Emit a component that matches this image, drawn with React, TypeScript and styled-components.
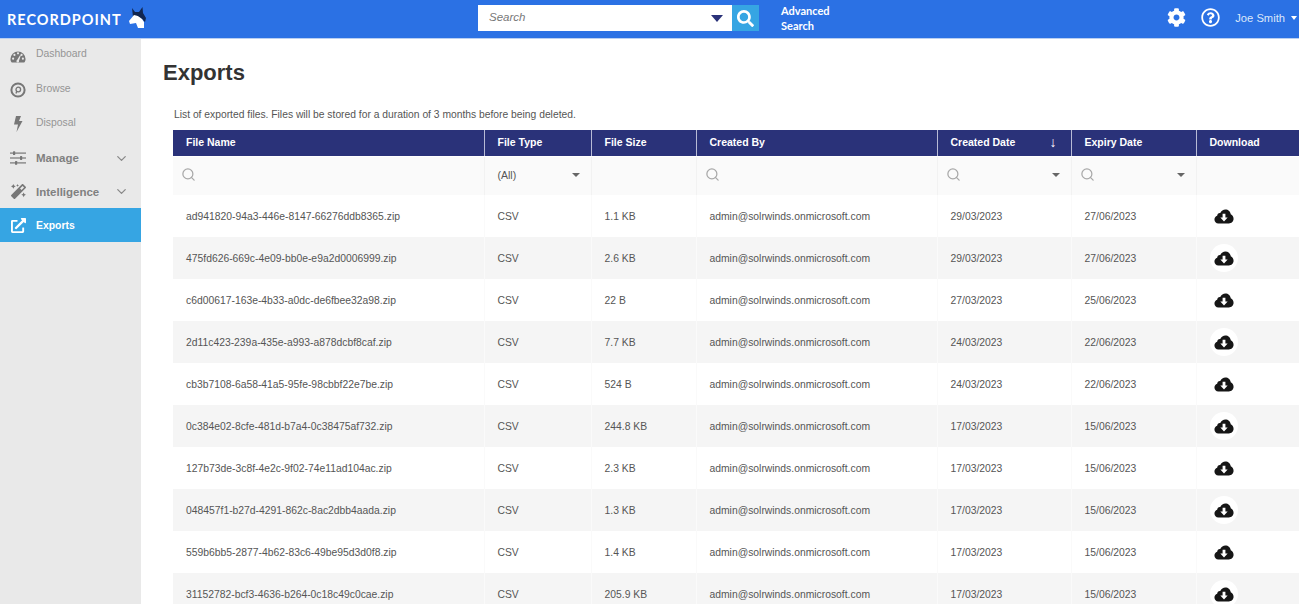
import React from "react";
import styled, { createGlobalStyle } from "styled-components";
import { FaCog, FaExternalLinkAlt, FaMagic, FaSearch, FaRegQuestionCircle } from "react-icons/fa";
import { FiChevronDown, FiSearch } from "react-icons/fi";

const GlobalStyle = createGlobalStyle`
  html, body {
    margin: 0;
    height: 100%;
    overflow: hidden;
    background: #fff;
    font-family: "Liberation Sans", Arial, sans-serif;
  }
`;

const Page = styled.div`
  width: 1299px;
  height: 604px;
  display: flex;
  flex-direction: column;
  overflow: hidden;
`;

const TopBar = styled.header`
  height: 36px;
  padding-bottom: 2px;
  flex: none;
  display: flex;
  align-items: center;
  background: #2b71e4;
  border-bottom: 1px solid #b9cff2;
  box-sizing: content-box;
  color: #fff;
`;

const Logo = styled.div`
  width: 478px;
  flex: none;
  display: flex;
  align-items: center;
  padding: 2px 0 0 7px;
  box-sizing: border-box;
  font-family: Lato, sans-serif;
  font-size: 14.5px;
  font-weight: 700;
  letter-spacing: 1px;
`;

const LogoMark = styled.svg`
  width: 18px;
  height: 22px;
  margin-left: 7px;
  margin-top: -4px;
`;

const SearchBox = styled.div`
  width: 254px;
  height: 26px;
  flex: none;
  display: flex;
  align-items: center;
  justify-content: space-between;
  padding: 0 9px 2px 11px;
  box-sizing: border-box;
  background: #fff;
  color: #777;
  font-size: 11.5px;
  font-style: italic;
`;

const SearchCaret = styled.span`
  width: 0;
  height: 0;
  margin-top: 2px;
  border-left: 6px solid transparent;
  border-right: 6px solid transparent;
  border-top: 7px solid #2a3279;
`;

const SearchButton = styled.button`
  width: 27px;
  height: 26px;
  flex: none;
  padding: 0;
  border: 0;
  display: flex;
  align-items: center;
  justify-content: center;
  background: #36a5e3;
  color: #fff;
  font-size: 17px;
`;

const AdvancedLink = styled.a`
  margin-left: 22px;
  width: 70px;
  font-family: Lato, sans-serif;
  font-size: 11px;
  font-weight: 700;
  line-height: 15px;
  color: #fff;
`;

const UserArea = styled.div`
  margin-left: auto;
  padding-right: 2px;
  display: flex;
  align-items: center;
  font-size: 11.2px;
  color: #dce7fa;
`;

const SettingsIcon = styled(FaCog)`
  font-size: 19px;
  color: #fff;
  margin: -1px 15px 0 0;
`;

const HelpIcon = styled(FaRegQuestionCircle)`
  font-size: 19px;
  color: #fff;
  margin: -1px 15px 0 0;
`;

const UserCaret = styled.span`
  width: 0;
  height: 0;
  margin: 0 0 0 6px;
  border-left: 3.5px solid transparent;
  border-right: 3.5px solid transparent;
  border-top: 4px solid #fff;
`;

const Body = styled.div`
  flex: 1;
  min-height: 0;
  display: flex;
`;

const Sidebar = styled.nav`
  width: 141px;
  flex: none;
  background: #e9e9e9;
`;

const NavItem = styled.a<{ $active?: boolean; $group?: boolean; $h: number }>`
  height: ${(p) => p.$h}px;
  display: flex;
  align-items: center;
  padding: 0 12px 0 10px;
  box-sizing: border-box;
  background: ${(p) => (p.$active ? "#36a5e3" : "transparent")};
  color: ${(p) => (p.$active ? "#fff" : p.$group ? "#808080" : "#959595")};
  font-size: ${(p) => (p.$group ? 11.5 : 10.4)}px;
  font-weight: ${(p) => (p.$group || p.$active ? 700 : 400)};
`;

const NavLabel = styled.span<{ $up?: number }>`
  position: relative;
  top: ${(p) => -(p.$up ?? 0)}px;
`;

const NavIcon = styled.span<{ $active?: boolean }>`
  width: 16px;
  height: 16px;
  margin-right: 10px;
  flex: none;
  display: flex;
  align-items: center;
  justify-content: center;
  font-size: 15px;
  color: ${(p) => (p.$active ? "#fff" : "#777")};
`;

const NavChevron = styled(FiChevronDown)`
  margin-left: auto;
  font-size: 15px;
  color: #888;
`;

const Main = styled.main`
  flex: 1;
  min-width: 0;
  padding: 21px 0 0 22px;
`;

const Title = styled.h1`
  margin: 0;
  font-size: 22px;
  line-height: 26px;
  font-weight: 700;
  color: #333;
`;

const Intro = styled.p`
  margin: 22px 0 0 11px;
  font-size: 10.3px;
  line-height: 14px;
  color: #555;
`;

const Table = styled.table`
  margin: 8px 0 0 10px;
  width: 1126px;
  border-collapse: collapse;
  table-layout: fixed;
  font-size: 10.35px;
  color: #555;
`;

const HeadCell = styled.th<{ $w: number }>`
  width: ${(p) => p.$w}px;
  height: 26px;
  padding: 0 0 2px 13px;
  box-sizing: border-box;
  background: #2a3279;
  border-left: 1px solid #b8bbd6;
  border-bottom: 1px solid #fff;
  color: #fff;
  font-size: 10.5px;
  font-weight: 700;
  text-align: left;
  &:first-child {
    border-left: 0;
  }
`;

const HeadInner = styled.span`
  display: flex;
  align-items: center;
  justify-content: space-between;
  padding-right: 14px;
`;

const SortArrow = styled.span`
  font-size: 14px;
  font-weight: 400;
  line-height: 14px;
`;

const FilterCell = styled.td`
  height: 39px;
  padding: 0 0 2px 8px;
  box-sizing: border-box;
  background: #fafafa;
  border-left: 1px solid #f2f2f2;
  &:first-child {
    border-left: 0;
  }
`;

const FilterInner = styled.div<{ $indent?: number }>`
  display: flex;
  align-items: center;
  justify-content: space-between;
  padding: 0 11px 0 ${(p) => p.$indent ?? 0}px;
  color: #555;
  font-size: 10.5px;
`;

const FilterSearch = styled(FiSearch)`
  font-size: 15px;
  color: #a8a8a8;
  display: block;
`;

const FilterCaret = styled.span`
  width: 0;
  height: 0;
  border-left: 4px solid transparent;
  border-right: 4px solid transparent;
  border-top: 4px solid #666;
`;

const Row = styled.tr`
  height: 42px;
  &:nth-child(even) td {
    background: #f5f5f5;
  }
`;

const Cell = styled.td<{ $pad?: number }>`
  padding: 0 0 0 ${(p) => p.$pad ?? 13}px;
  box-sizing: border-box;
  border-left: 1px solid #fafafa;
  background: #fff;
  &:first-child {
    border-left: 0;
  }
`;

const DownloadCircle = styled.span<{ $lit?: boolean }>`
  width: 28px;
  height: 28px;
  margin-left: 13px;
  border-radius: 50%;
  display: flex;
  align-items: center;
  justify-content: center;
  background: ${(p) => (p.$lit ? "#fff" : "transparent")};
`;

const CloudIcon = () => (
  <svg width="20" height="15" viewBox="0 0 21 16">
    <path
      d="M4.5 15.5C2 15.5 .3 13.6 .3 11.3c0-1.900 1.200-3.500 2.900-4C3.300 5.300 4.800 4 6.500 4.300 7.600 1.800 9.700.5 12 .5c3 0 5.400 2.200 5.700 5.200 1.800.8 3 2.700 3 4.800 0 2.800-2.200 5-5 5Z"
      fill="#161616"
    />
    <path d="M9 5h3v4h2.400l-3.900 4.200L6.600 9H9Z" fill="#fff" />
  </svg>
);

const GaugeIcon = () => (
  <svg width="18" height="16" viewBox="0 0 18 16">
    <path d="M.5 11.500a8.500 8.500 0 1 1 17 0c0 1.300-.3 2.300-.9 3.300a1 1 0 0 1-.8.400H2.200a1 1 0 0 1-.8-.4C.8 13.800.5 12.800.5 11.500Z" fill="#777" />
    <g fill="#e9e9e9">
      <circle cx="3.500" cy="11" r="1.200" />
      <circle cx="5" cy="6.800" r="1.200" />
      <circle cx="9" cy="5" r="1.200" />
      <circle cx="13" cy="6.800" r="1.200" />
      <circle cx="14.500" cy="11" r="1.200" />
      <path d="M8 12.500 11.500 7l.6.300-2 6a1.500 1.500 0 1 1-2.100-.8Z" />
    </g>
  </svg>
);

const DiscIcon = () => (
  <svg width="16" height="16" viewBox="0 0 16 16" fill="none" stroke="#777">
    <circle cx="8" cy="8" r="6.600" strokeWidth="2" />
    <circle cx="8.300" cy="7.500" r="2.300" strokeWidth="1.300" />
    <path d="M6.800 9 6 11.500" strokeWidth="1.300" />
  </svg>
);

const BoltIcon = () => (
  <svg width="10" height="16" viewBox="0 0 10 16">
    <path d="M3 0h5L6 5h3.500L3.500 16 5 8.500H1Z" fill="#777" />
  </svg>
);

const SlidersIcon = () => (
  <svg width="16" height="14" viewBox="0 0 16 14" fill="#777">
    <rect x="0" y="1.500" width="16" height="1.200" />
    <rect x="0" y="6.400" width="16" height="1.200" />
    <rect x="0" y="11.300" width="16" height="1.200" />
    <rect x="3" y=".2" width="2.200" height="3.800" rx=".6" />
    <rect x="10" y="5.100" width="2.200" height="3.800" rx=".6" />
    <rect x="5" y="10" width="2.200" height="3.800" rx=".6" />
  </svg>
);

const rows = [
  ["ad941820-94a3-446e-8147-66276ddb8365.zip", "1.1 KB", "29/03/2023", "27/06/2023"],
  ["475fd626-669c-4e09-bb0e-e9a2d0006999.zip", "2.6 KB", "29/03/2023", "27/06/2023"],
  ["c6d00617-163e-4b33-a0dc-de6fbee32a98.zip", "22 B", "27/03/2023", "25/06/2023"],
  ["2d11c423-239a-435e-a993-a878dcbf8caf.zip", "7.7 KB", "24/03/2023", "22/06/2023"],
  ["cb3b7108-6a58-41a5-95fe-98cbbf22e7be.zip", "524 B", "24/03/2023", "22/06/2023"],
  ["0c384e02-8cfe-481d-b7a4-0c38475af732.zip", "244.8 KB", "17/03/2023", "15/06/2023"],
  ["127b73de-3c8f-4e2c-9f02-74e11ad104ac.zip", "2.3 KB", "17/03/2023", "15/06/2023"],
  ["048457f1-b27d-4291-862c-8ac2dbb4aada.zip", "1.3 KB", "17/03/2023", "15/06/2023"],
  ["559b6bb5-2877-4b62-83c6-49be95d3d0f8.zip", "1.4 KB", "17/03/2023", "15/06/2023"],
  ["31152782-bcf3-4636-b264-0c18c49c0cae.zip", "205.9 KB", "17/03/2023", "15/06/2023"],
];

export default function App() {
  return (
    <Page>
      <GlobalStyle />
      <TopBar>
        <Logo>
          RECORDPOINT
          <LogoMark viewBox="0 0 18 22">
            <path d="M3 2 6 6 10 6 13.500 1 14 7 17 12 16 16 13 13 7 10 4 11Z" fill="#12264f" />
            <path d="M0 15 5 9 9 10 13 13 15 16 15 22 9 22 7 17 1 18Z" fill="#fff" />
            <path d="M7 8 11 8 13 11 9 10Z" fill="#12264f" />
          </LogoMark>
        </Logo>
        <SearchBox>
          Search
          <SearchCaret />
        </SearchBox>
        <SearchButton>
          <FaSearch />
        </SearchButton>
        <AdvancedLink>Advanced Search</AdvancedLink>
        <UserArea>
          <SettingsIcon />
          <HelpIcon />
          Joe Smith
          <UserCaret />
        </UserArea>
      </TopBar>
      <Body>
        <Sidebar>
          <NavItem $h={34}>
            <NavIcon><GaugeIcon /></NavIcon>
            <NavLabel $up={3}>Dashboard</NavLabel>
          </NavItem>
          <NavItem $h={34}>
            <NavIcon><DiscIcon /></NavIcon>
            <NavLabel $up={2}>Browse</NavLabel>
          </NavItem>
          <NavItem $h={34}>
            <NavIcon><BoltIcon /></NavIcon>
            <NavLabel $up={2}>Disposal</NavLabel>
          </NavItem>
          <NavItem $h={34} $group>
            <NavIcon><SlidersIcon /></NavIcon>
            Manage
            <NavChevron />
          </NavItem>
          <NavItem $h={33} $group>
            <NavIcon><FaMagic /></NavIcon>
            Intelligence
            <NavChevron />
          </NavItem>
          <NavItem $h={34} $active>
            <NavIcon $active><FaExternalLinkAlt /></NavIcon>
            Exports
          </NavItem>
        </Sidebar>
        <Main>
          <Title>Exports</Title>
          <Intro>List of exported files. Files will be stored for a duration of 3 months before being deleted.</Intro>
          <Table>
            <thead>
              <tr>
                <HeadCell $w={311}>File Name</HeadCell>
                <HeadCell $w={107}>File Type</HeadCell>
                <HeadCell $w={105}>File Size</HeadCell>
                <HeadCell $w={241}>Created By</HeadCell>
                <HeadCell $w={134}>
                  <HeadInner>Created Date<SortArrow>↓</SortArrow></HeadInner>
                </HeadCell>
                <HeadCell $w={125}>Expiry Date</HeadCell>
                <HeadCell $w={103}>Download</HeadCell>
              </tr>
            </thead>
            <tbody>
              <tr>
                <FilterCell><FilterSearch /></FilterCell>
                <FilterCell>
                  <FilterInner $indent={5}>(All)<FilterCaret /></FilterInner>
                </FilterCell>
                <FilterCell />
                <FilterCell><FilterSearch /></FilterCell>
                <FilterCell>
                  <FilterInner><FilterSearch /><FilterCaret /></FilterInner>
                </FilterCell>
                <FilterCell>
                  <FilterInner><FilterSearch /><FilterCaret /></FilterInner>
                </FilterCell>
                <FilterCell />
              </tr>
            </tbody>
            <tbody>
              {rows.map((r, i) => (
                <Row key={r[0]}>
                  <Cell>{r[0]}</Cell>
                  <Cell>CSV</Cell>
                  <Cell>{r[1]}</Cell>
                  <Cell>admin@solrwinds.onmicrosoft.com</Cell>
                  <Cell>{r[2]}</Cell>
                  <Cell>{r[3]}</Cell>
                  <Cell $pad={0}>
                    <DownloadCircle $lit={i % 2 === 1}><CloudIcon /></DownloadCircle>
                  </Cell>
                </Row>
              ))}
            </tbody>
          </Table>
        </Main>
      </Body>
    </Page>
  );
}
